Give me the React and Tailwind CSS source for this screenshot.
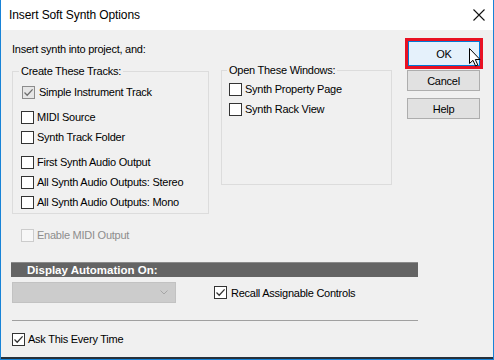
import React from 'react'

const Box = ({ checked, muted, disabled }) => {
    const frame = disabled
        ? 'border-[#cccccc] bg-[#f7f7f7]'
        : muted
            ? 'border-[#8c8c8c] bg-[#e6e6e6]'
            : 'border-[#333333] bg-white'
    return (
        <span className={`w-[13px] h-[13px] shrink-0 border flex items-center justify-center ${frame}`}>
            {checked && (
                <svg width="11" height="11" viewBox="0 0 11 11">
                    <path d="M1.5 5.5 L4.2 8.2 L9.6 2.4" fill="none" stroke={muted ? '#707070' : '#333'} strokeWidth="1.3" />
                </svg>
            )}
        </span>
    )
}

const Check = ({ label, checked, muted, disabled, className = '' }) => (
    <div className={`flex items-center gap-[3px] h-[20px] ${className}`}>
        <Box checked={checked} muted={muted} disabled={disabled} />
        <span className={disabled ? 'text-[#8d8d8d]' : 'text-black'}>{label}</span>
    </div>
)

const Legend = ({ children }) => (
    <legend className="ml-[-2px] px-[2px] leading-[14px] text-black">{children}</legend>
)

export default function App() {
    return (
        <div className="w-[494px] h-[360px] flex flex-col relative overflow-hidden border-x border-b border-[#1883d7] bg-white font-['Liberation_Sans',Arial,sans-serif] text-[11px] tracking-[-0.25px] leading-[14px] text-black">
            {/* Title bar */}
            <div className="h-[30px] shrink-0 bg-white flex items-center justify-between pl-[8px] pr-[8px]">
                <span className="text-[12px] tracking-[-0.1px] pb-[1px]">Insert Soft Synth Options</span>
                <svg width="12" height="12" viewBox="0 0 12 12">
                    <path d="M0.5 0.5 L11.5 11.5 M11.5 0.5 L0.5 11.5" stroke="#111" strokeWidth="1.1" />
                </svg>
            </div>

            {/* Body */}
            <div className="flex-1 bg-[#f0f0f0] flex pl-[11px]">
                <div className="w-[393px] shrink-0 flex flex-col pt-[12px]">
                    <div className="h-[14px]">Insert synth into project, and:</div>

                    <div className="flex items-start mt-[7px]">
                        <fieldset className="w-[197px] mt-[1px] border border-[#dcdcdc] px-[8px] pb-[1px]">
                            <Legend>Create These Tracks:</Legend>
                            <div className="pt-[4px] flex flex-col">
                                <Check label="Simple Instrument Track" checked muted className="ml-[1px] gap-[4px]" />
                                <Check label="MIDI Source" className="mt-[5px]" />
                                <Check label="Synth Track Folder" />
                                <Check label="First Synth Audio Output" className="mt-[5px]" />
                                <Check label="All Synth Audio Outputs: Stereo" className="h-[19px]" />
                                <Check label="All Synth Audio Outputs: Mono" />
                            </div>
                        </fieldset>

                        <fieldset className="w-[171px] h-[122px] ml-[12px] border border-[#dcdcdc] px-[7px]">
                            <Legend>Open These Windows:</Legend>
                            <div className="pt-[2px] flex flex-col">
                                <Check label="Synth Property Page" />
                                <Check label="Synth Rack View" />
                            </div>
                        </fieldset>
                    </div>

                    <Check label="Enable MIDI Output" disabled className="mt-[11px] ml-[9px]" />

                    <div className="w-[407px] h-[15px] ml-[-1px] mt-[17px] bg-[#646464] border-t border-[#8a8a8a] flex items-center pl-[16px]">
                        <span className="text-white font-bold text-[11.5px] tracking-[0px]">Display Automation On:</span>
                    </div>

                    <div className="flex items-center mt-[5px] h-[21px]">
                        <div className="w-[164px] h-[21px] bg-[#cccccc] border border-[#c2c2c2] flex items-center justify-end pr-[7px]">
                            <svg width="8" height="5" viewBox="0 0 8 5">
                                <path d="M0.5 0.5 L4 4 L7.5 0.5" fill="none" stroke="#a6a6a6" strokeWidth="1" />
                            </svg>
                        </div>
                        <Check label="Recall Assignable Controls" checked className="ml-[38px] gap-[4px]" />
                    </div>

                    <div className="w-[406px] mt-[17px] border-t border-[#a0a0a0]" />

                    <Check label="Ask This Every Time" checked className="mt-[8px]" />
                </div>

                {/* Buttons */}
                <div className="flex flex-col pt-[8px]">
                    <div className="w-[78px] h-[31px] border-[3px] border-[#e81123]">
                        <div className="w-full h-full bg-[#e5f1fb] border border-[#0078d7] flex items-center justify-center">OK</div>
                    </div>
                    <div className="w-[73px] h-[21px] ml-[2px] mt-[1px] bg-[#e1e1e1] border border-[#adadad] flex items-center justify-center">Cancel</div>
                    <div className="w-[73px] h-[21px] ml-[2px] mt-[7px] bg-[#e1e1e1] border border-[#adadad] flex items-center justify-center">Help</div>
                </div>
            </div>
            <div className="h-[2px] shrink-0 bg-[#27313b]" />

            {/* Mouse cursor */}
            <svg className="absolute left-[468px] top-[48px]" width="13" height="19" viewBox="0 0 13 19">
                <path d="M0.5 0.5 L0.5 15.5 L4 12.3 L6.6 18 L8.8 17 L6.3 11.5 L11 11.5 Z" fill="#fff" stroke="#000" strokeWidth="1" strokeLinejoin="miter" />
            </svg>
        </div>
    )
}
